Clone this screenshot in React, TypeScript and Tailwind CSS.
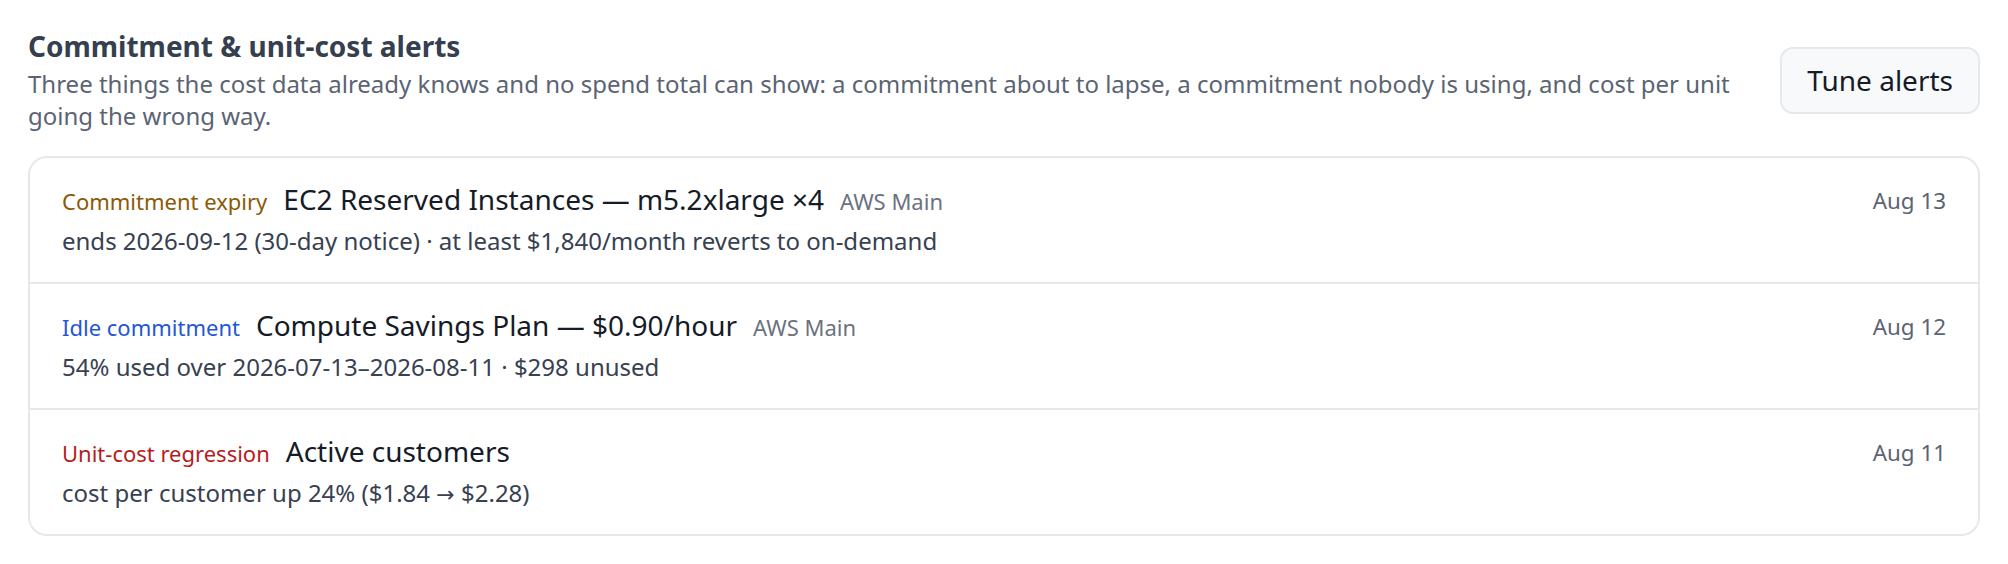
import React from 'react'

type Alert = {
  kind: string
  kindClass: string
  title: string
  account?: string
  detail: React.ReactNode
  date: string
}

const alerts: Alert[] = [
  {
    kind: 'Commitment expiry',
    kindClass: 'text-[#8c5a06]',
    title: 'EC2 Reserved Instances — m5.2xlarge ×4',
    account: 'AWS Main',
    detail: 'ends 2026-09-12 (30-day notice) · at least $1,840/month reverts to on-demand',
    date: 'Aug 13',
  },
  {
    kind: 'Idle commitment',
    kindClass: 'text-[#2456d6]',
    title: 'Compute Savings Plan — $0.90/hour',
    account: 'AWS Main',
    detail: '54% used over 2026-07-13–2026-08-11 · $298 unused',
    date: 'Aug 12',
  },
  {
    kind: 'Unit-cost regression',
    kindClass: 'text-[#b71c1c]',
    title: 'Active customers',
    detail: (
      <>
        cost per customer up 24% ($1.84{' '}
        <span className="font-['DejaVu_Sans',sans-serif] text-[22px] leading-none">→</span> $2.28)
      </>
    ),
    date: 'Aug 11',
  },
]

export default function App() {
  return (
    <main className="min-h-screen bg-white p-[28px] font-['Noto_Sans',sans-serif]">
      {/* Header */}
      <div className="flex items-center gap-8">
        <div className="flex-1">
          <h2 className="text-[28px] leading-[36px] font-bold text-[#353f50]">
            Commitment &amp; unit-cost alerts
          </h2>
          <p className="mt-[4px] text-[24px] leading-[32px] text-[#5b6473]">
            Three things the cost data already knows and no spend total can show: a commitment about to lapse, a
            commitment nobody is using, and cost per unit going the wrong way.
          </p>
        </div>
        <button className="h-[67px] px-[25px] rounded-[13px] border-2 border-[#e6e8ec] bg-[#f8f9fb] text-[28px] text-[#161b26]">
          Tune alerts
        </button>
      </div>

      {/* Alerts */}
      <div className="mt-[24px] rounded-[19px] border-2 border-[#e6e8ec] divide-y-2 divide-[#e6e8ec]">
        {alerts.map((a) => (
          <div key={a.kind} className="flex items-start justify-between px-8 pt-[23px] pb-[25px]">
            <div>
              <div className="flex items-baseline gap-4">
                <span className={`text-[22px] ${a.kindClass}`}>{a.kind}</span>
                <span className="text-[28px] leading-[36px] text-[#151b27]">{a.title}</span>
                {a.account && <span className="text-[22px] text-[#6b7280]">{a.account}</span>}
              </div>
              <div className="mt-[7px] text-[24px] leading-[32px] text-[#374151]">{a.detail}</div>
            </div>
            <div className="mt-[4px] text-[22.4px] leading-[32px] text-[#5b6473]">{a.date}</div>
          </div>
        ))}
      </div>
    </main>
  )
}
